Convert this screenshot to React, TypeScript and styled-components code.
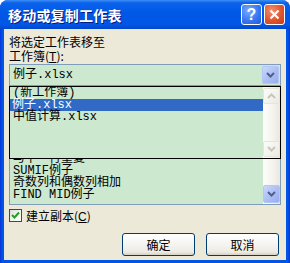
import React from "react";
import styled, { createGlobalStyle } from "styled-components";

const Global = createGlobalStyle`
  html, body { margin: 0; padding: 0; background: #ffffff; }
  body {
    font-family: "Liberation Mono", "Noto Sans CJK SC", monospace;
    font-size: 12px;
    color: #000;
  }
`;

const Window = styled.div`
  width: 290px;
  height: 263px;
  box-sizing: border-box;
  display: flex;
  flex-direction: column;
  background: linear-gradient(to right, #0831d9 0, #0055e5 2px, #0055e5 calc(100% - 2px), #0831d9 100%);
  border-radius: 8px 8px 0 0;
  overflow: hidden;
`;

const TitleBar = styled.div`
  height: 29px;
  flex: none;
  display: flex;
  align-items: center;
  padding: 0 5px 0 8px;
  background: linear-gradient(180deg, #3d8ef5 0%, #0a62ec 10%, #0058e6 45%, #0256e5 85%, #0047c8 100%);
`;

const Title = styled.div`
  flex: 1;
  font-family: "Noto Sans CJK SC", sans-serif;
  font-weight: 700;
  font-size: 14px;
  letter-spacing: 0.2px;
  color: #ffffff;
  text-shadow: 1px 1px 0 #0a1883;
  line-height: 16px;
  margin-top: 1px;
`;

const CaptionButton = styled.div<{ $kind: "help" | "close" }>`
  width: 21px;
  height: 21px;
  box-sizing: border-box;
  border: 1px solid #ffffff;
  border-radius: 3px;
  margin-left: 2px;
  display: flex;
  align-items: center;
  justify-content: center;
  background: ${(p) =>
    p.$kind === "close"
      ? "radial-gradient(circle at 35% 30%, #f0906e 0%, #e0542e 55%, #c83a18 100%)"
      : "radial-gradient(circle at 35% 30%, #7aaaff 0%, #3a78f2 55%, #1f58dc 100%)"};
  color: #fff;
  font-family: "Liberation Sans", sans-serif;
  font-weight: 700;
  font-size: 16px;
  line-height: 1;
`;

const Body = styled.div`
  flex: 1;
  margin: 0 4px 3px;
  background: #ece9d8;
  padding: 6px 5px 0;
  display: flex;
  flex-direction: column;
  position: relative;
`;

const Label = styled.div<{ $gap?: number }>`
  height: 14px;
  line-height: 14px;
  margin-top: ${(p) => p.$gap ?? 0}px;
  font-family: "Noto Sans CJK SC", sans-serif;
  white-space: nowrap;
`;

const Key = styled.span`
  text-decoration: underline;
  font-family: "Liberation Sans", sans-serif;
`;

const Combo = styled.div`
  margin-top: 1px;
  height: 22px;
  box-sizing: border-box;
  border: 1px solid #7f9db9;
  background: #cce8cf;
  display: flex;
  align-items: center;
  padding: 0 1px 0 3px;
`;

const ComboText = styled.div`
  flex: 1;
  line-height: 14px;
  white-space: nowrap;
`;

const ArrowButton = styled.div<{ $state: "blue" | "disabled" }>`
  width: 17px;
  height: ${(p) => (p.$state === "blue" ? 18 : 16)}px;
  box-sizing: border-box;
  flex: none;
  display: flex;
  align-items: center;
  justify-content: center;
  border-radius: 2px;
  border: 1px solid ${(p) => (p.$state === "blue" ? "#b4c6f4" : "#e6e4dc")};
  background: ${(p) =>
    p.$state === "blue"
      ? "linear-gradient(135deg, #cad8fb 0%, #aebff4 50%, #98adf0 100%)"
      : "linear-gradient(135deg, #fbfbf9 0%, #f2f1ec 60%, #ebe9e1 100%)"};
`;

const Listbox = styled.div<{ $height: number; $border: string }>`
  height: ${(p) => p.$height}px;
  box-sizing: border-box;
  border: 1px solid ${(p) => p.$border};
  background: #cce8cf;
  display: flex;
  overflow: hidden;
`;

const Dropdown = styled(Listbox)`
  position: absolute;
  left: 5px;
  right: 5px;
  top: 57px;
  z-index: 2;
`;

const Items = styled.div<{ $offset?: number }>`
  flex: 1;
  display: flex;
  flex-direction: column;
  overflow: hidden;
  padding-top: ${(p) => p.$offset ?? 0}px;
`;

const Item = styled.div<{ $selected?: boolean }>`
  height: 12px;
  flex: none;
  line-height: 12px;
  padding-left: ${(p) => (p.$selected ? 2 : 3)}px;
  white-space: nowrap;
  background: ${(p) => (p.$selected ? "#316ac5" : "transparent")};
  color: ${(p) => (p.$selected ? "#ffffff" : "#000000")};
`;

const Scrollbar = styled.div<{ $align: "top" | "bottom" | "both" }>`
  width: 17px;
  flex: none;
  display: flex;
  flex-direction: column;
  justify-content: ${(p) =>
    p.$align === "bottom" ? "flex-end" : p.$align === "top" ? "flex-start" : "space-between"};
  background: linear-gradient(to right, #fdfdfa 0%, #f4f3ee 60%, #e9e7de 100%);
  padding: 1px 0;
  box-sizing: border-box;
`;

const Spacer = styled.div<{ $h: number }>`
  height: ${(p) => p.$h}px;
  flex: none;
`;

const CheckRow = styled.div`
  margin-top: 4px;
  display: flex;
  align-items: center;
  gap: 4px;
  height: 13px;
`;

const CheckBox = styled.div`
  width: 13px;
  height: 13px;
  box-sizing: border-box;
  border: 1px solid #1c5180;
  background: linear-gradient(135deg, #dcdcd7 0%, #f7f7f4 60%, #ffffff 100%);
  display: flex;
  align-items: center;
  justify-content: center;
`;

const ButtonRow = styled.div`
  margin-top: 11px;
  display: flex;
  justify-content: flex-end;
  gap: 11px;
  padding-right: 2px;
`;

const Button = styled.div`
  width: 73px;
  height: 23px;
  box-sizing: border-box;
  border: 1px solid #003c74;
  border-radius: 3px;
  background: linear-gradient(180deg, #ffffff 0%, #f6f5f1 45%, #ecebe4 85%, #d6d0c5 100%);
  display: flex;
  align-items: center;
  justify-content: center;
  font-family: "Noto Sans CJK SC", sans-serif;
  line-height: 14px;
`;

const Chevron: React.FC<{ dir: "up" | "down"; color: string }> = ({ dir, color }) => (
  <svg width="9" height="6" viewBox="0 0 9 6">
    <path
      d={dir === "down" ? "M1 1 L4.5 4.5 L8 1" : "M1 5 L4.5 1.5 L8 5"}
      fill="none"
      stroke={color}
      strokeWidth="2"
    />
  </svg>
);

/* Rows of the sheet list that show below the open drop-down */
const visibleSheets = ["与下一行重复", "SUMIF例子", "奇数列和偶数列相加", "FIND MID例子"];

export default function App() {
  return (
    <>
      <Global />
      <Window>
        <TitleBar>
          <Title>移动或复制工作表</Title>
          <CaptionButton $kind="help">?</CaptionButton>
          <CaptionButton $kind="close">
            <svg width="11" height="11" viewBox="0 0 11 11">
              <path d="M1.5 1.5 L9.5 9.5 M9.5 1.5 L1.5 9.5" stroke="#fff" strokeWidth="2.2" />
            </svg>
          </CaptionButton>
        </TitleBar>
        <Body>
          <Label>将选定工作表移至</Label>
          <Label>
            工作簿(<Key>T</Key>):
          </Label>
          <Combo>
            <ComboText>例子.xlsx</ComboText>
            <ArrowButton $state="blue">
              <Chevron dir="down" color="#4d6185" />
            </ArrowButton>
          </Combo>
          {/* label of the sheet list, covered by the open drop-down */}
          <Spacer $h={18} />
          <Listbox $height={101} $border="#7f9db9">
            <Items $offset={48}>
              {visibleSheets.map((s) => (
                <Item key={s}>{s}</Item>
              ))}
            </Items>
            <Scrollbar $align="bottom">
              <ArrowButton $state="blue">
                <Chevron dir="down" color="#4d6185" />
              </ArrowButton>
            </Scrollbar>
          </Listbox>
          <Dropdown $height={73} $border="#000000">
            <Items>
              <Item>(新工作簿)</Item>
              <Item $selected>例子.xlsx</Item>
              <Item>中值计算.xlsx</Item>
            </Items>
            <Scrollbar $align="both">
              <ArrowButton $state="disabled">
                <Chevron dir="up" color="#c9c7ba" />
              </ArrowButton>
              <ArrowButton $state="disabled">
                <Chevron dir="down" color="#c9c7ba" />
              </ArrowButton>
            </Scrollbar>
          </Dropdown>
          <CheckRow>
            <CheckBox>
              <svg width="9" height="9" viewBox="0 0 9 9">
                <path d="M1 4 L3.5 6.5 L8 1.5" fill="none" stroke="#21a121" strokeWidth="2" />
              </svg>
            </CheckBox>
            <Label>
              建立副本(<Key>C</Key>)
            </Label>
          </CheckRow>
          <ButtonRow>
            <Button>确定</Button>
            <Button>取消</Button>
          </ButtonRow>
        </Body>
      </Window>
    </>
  );
}
